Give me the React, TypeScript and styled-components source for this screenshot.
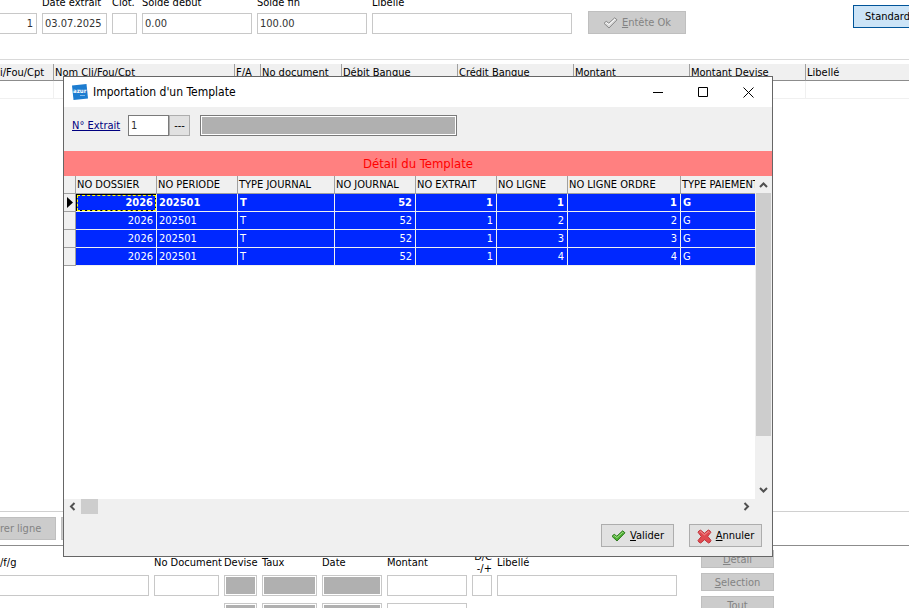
import React, { useState } from 'react';
import styled, { createGlobalStyle } from 'styled-components';

const GlobalStyle = createGlobalStyle`
    * {
        box-sizing: border-box;
    }

    body {
        margin: 0;
        background: #ffffff;
    }

    body, button, input, table {
        font-family: 'DejaVu Sans Condensed', 'DejaVu Sans', Tahoma, sans-serif;
        font-size: 11px;
        line-height: 14px;
        color: #000000;
    }
`;

const Page = styled.div`
    position: relative;
    display: flex;
    flex-direction: column;
    height: 100vh;
    overflow: hidden;
`;

const HeaderForm = styled.header`
    display: flex;
    flex: none;
    align-items: flex-end;
    gap: 5px;
    height: 34px;
    overflow: hidden;
`;

const Field = styled.div<{ $width: number }>`
    display: flex;
    flex: none;
    flex-direction: column;
    gap: 3px;
    width: ${({ $width }) => $width}px;
`;

const Label = styled.label`
    white-space: nowrap;
`;

const TextBox = styled.input<{ $filled?: boolean; $alignRight?: boolean; $cut?: boolean; $dark?: boolean }>`
    width: 100%;
    min-width: 0;
    height: 21px;
    margin: 0;
    padding: ${({ $filled }) => ($filled ? '1px' : '0 3px 0 2px')};
    border: 1px solid ${({ $dark }) => ($dark ? '#7a7a7a' : '#c8c8c8')};
    border-left-width: ${({ $cut }) => ($cut ? 0 : 1)}px;
    border-radius: 0;
    background: ${({ $filled }) => ($filled ? '#b0b0b0' : '#ffffff')};
    box-shadow: ${({ $filled }) => ($filled ? 'inset 0 0 0 1px #ffffff' : 'none')};
    color: #333333;
    text-align: ${({ $alignRight }) => ($alignRight ? 'right' : 'left')};
    outline: none;
`;

const Button = styled.button<{ $width: number; $height?: number }>`
    display: flex;
    flex: none;
    align-items: center;
    justify-content: center;
    gap: 4px;
    width: ${({ $width }) => $width}px;
    height: ${({ $height = 23 }) => $height}px;
    padding: 1px 0 0;
    border: 1px solid #adadad;
    border-radius: 0;
    background: #e1e1e1;
    white-space: nowrap;

    &:disabled {
        border-color: #bfbfbf;
        background: #cccccc;
        color: #838383;
    }
`;

const HeaderButton = styled(Button)`
    margin-left: 11px;
`;

const StandardButton = styled(Button)`
    justify-content: flex-start;
    margin-left: auto;
    margin-bottom: 6px;
    padding-left: 11px;
    border-color: #005499;
    border-right: 0;
    background: #cce4f7;
    overflow: hidden;
`;

const Hotkey = styled.span`
    text-decoration: underline;
`;

const GridArea = styled.main`
    flex: 1;
    min-height: 0;
    margin-top: 25px;
    padding-top: 4px;
    border-top: 1px solid #d9d9d9;
    border-bottom: 1px solid #d0d0d0;
    overflow: hidden;
`;

const EntryTable = styled.table`
    width: 100%;
    table-layout: fixed;
    border-collapse: separate;
    border-spacing: 0;

    th {
        height: 17px;
        padding: 1px 0 0 1px;
        border-right: 1px solid #a0a0a0;
        border-bottom: 1px solid #8c8c8c;
        background: #f0f0f0;
        font-weight: normal;
        text-align: left;
        white-space: nowrap;
    }

    th:first-child {
        padding-left: 0;
    }

    td {
        height: 18px;
        padding: 0;
        border-right: 1px solid #f0f0f0;
        border-bottom: 1px solid #f0f0f0;
    }

    th:last-child, td:last-child {
        border-right: 0;
    }
`;

const LineActions = styled.div`
    display: flex;
    flex: none;
    gap: 5px;
    height: 34px;
    padding-top: 5px;
    border-bottom: 1px solid #8c8c8c;
`;

const CutButton = styled(Button)`
    justify-content: flex-start;
    border-left: 0;
`;

const EntryForm = styled.footer`
    display: flex;
    flex: none;
    height: 62px;
    overflow: hidden;
`;

const EntryFields = styled.div`
    display: grid;
    grid-template-columns: 149px 65px 33px 55px 60px 80px 20px 180px;
    grid-template-rows: 29px 21px 28px;
    column-gap: 5px;
    align-items: start;
`;

const EntryLabel = styled.label`
    padding-top: 10px;
    white-space: nowrap;
`;

const SignLabel = styled.label`
    padding-top: 5px;
    line-height: 12px;
    text-align: right;
    white-space: nowrap;
`;

const SecondRow = styled.div`
    display: grid;
    grid-column: 3 / span 4;
    grid-template-columns: subgrid;
    padding-top: 7px;
`;

const SideActions = styled.div`
    display: flex;
    flex-direction: column;
    gap: 5px;
    margin: 4px 0 0 24px;
`;

const SideButton = styled(Button)`
    padding-top: 2px;
`;

const Dialog = styled.section`
    position: absolute;
    top: 76px;
    right: 136px;
    bottom: 51px;
    left: 63px;
    display: flex;
    flex-direction: column;
    border: 1px solid #666666;
    background: #f0f0f0;
`;

const TitleBar = styled.div`
    display: flex;
    flex: none;
    align-items: center;
    height: 30px;
    padding-left: 8px;
    background: #ffffff;
`;

const Title = styled.h1`
    flex: 1;
    margin: 0 0 0 5px;
    font-size: 12px;
    font-weight: normal;
`;

const WindowButton = styled.button`
    display: flex;
    align-items: center;
    justify-content: center;
    width: 46px;
    height: 30px;
    padding: 0;
    border: 0;
    background: transparent;
`;

const SearchRow = styled.div`
    display: flex;
    flex: none;
    align-items: flex-start;
    height: 44px;
    padding: 8px 0 0 8px;
`;

const SearchLabel = styled.label`
    width: 56px;
    line-height: 21px;
    color: #000080;
    text-decoration: underline;
    white-space: nowrap;
`;

const SearchBox = styled.div<{ $width: number }>`
    display: flex;
    width: ${({ $width }) => $width}px;
`;

const LookupButton = styled(Button)`
    margin-right: 10px;
`;

const Banner = styled.h2`
    flex: none;
    height: 25px;
    margin: 0;
    background: #ff8080;
    color: #ff0000;
    font-size: 13px;
    font-weight: normal;
    line-height: 25px;
    text-align: center;
`;

const Detail = styled.div`
    display: flex;
    flex: 1;
    min-height: 0;
`;

const DetailView = styled.div`
    flex: 1;
    min-width: 0;
    background: #ffffff;
    overflow: hidden;
`;

const DetailTable = styled.table`
    width: 100%;
    table-layout: fixed;
    border-collapse: separate;
    border-spacing: 0;
`;

const HeadCell = styled.th`
    height: 18px;
    padding: 1px 0 0 1px;
    border-right: 1px solid #a0a0a0;
    border-bottom: 1px solid #a0a0a0;
    background: #f0f0f0;
    font-weight: normal;
    text-align: left;
    white-space: nowrap;
    overflow: hidden;

    &:last-child {
        border-right: 0;
    }
`;

const MarkerCell = styled.td`
    height: 18px;
    padding: 0 0 0 3px;
    border-right: 1px solid #a0a0a0;
    border-bottom: 1px solid #a0a0a0;
    background: #f0f0f0;
    line-height: 0;
`;

const DataCell = styled.td<{ $right?: boolean; $current?: boolean; $focused?: boolean }>`
    height: 18px;
    padding: 1px ${({ $right }) => ($right ? 3 : 0)}px 0 2px;
    border-right: 1px solid #f0f0f0;
    border-bottom: 1px solid #f0f0f0;
    background: #0028ff;
    color: #ffffff;
    font-weight: ${({ $current }) => ($current ? 'bold' : 'normal')};
    text-align: ${({ $right }) => ($right ? 'right' : 'left')};

    ${({ $focused }) => $focused && `
        box-shadow: inset 0 0 0 1px #000000;
        outline: 1px dashed #ffff00;
        outline-offset: -2px;
    `}

    &:last-child {
        border-right: 0;
    }
`;

const VerticalBar = styled.div`
    display: flex;
    flex: none;
    flex-direction: column;
    width: 17px;
    padding: 0 1px;
`;

const HorizontalBar = styled.div`
    display: flex;
    flex: none;
    height: 15px;
    padding-right: 17px;
`;

const Arrow = styled.button`
    display: flex;
    flex: none;
    align-items: center;
    justify-content: center;
    width: 17px;
    height: 17px;
    padding: 0;
    border: 0;
    background: transparent;

    ${VerticalBar} & {
        width: 15px;
    }

    ${HorizontalBar} & {
        height: 15px;
    }
`;

const Track = styled.div`
    display: flex;
    flex: 1;
    flex-direction: inherit;
    min-height: 0;
`;

const VerticalThumb = styled.div`
    width: 15px;
    height: 84%;
    background: #cdcdcd;
`;

const HorizontalThumb = styled.div`
    width: 17px;
    background: #cdcdcd;
`;

const DialogActions = styled.div`
    display: flex;
    flex: none;
    justify-content: flex-end;
    gap: 15px;
    padding: 10px 10px 9px;
`;

const arrowPaths = {
    up: 'M1 7 L4.500 3.500 L8 7',
    down: 'M1 2 L4.500 5.500 L8 2',
    left: 'M6.500 1 L3 4.500 L6.500 8',
    right: 'M2.500 1 L6 4.500 L2.500 8',
};

const Chevron: React.FC<{ to: keyof typeof arrowPaths }> = ({ to }) => (
    <svg width="9" height="9" viewBox="0 0 9 9" fill="none" stroke="#505050" strokeWidth="2">
        <path d={arrowPaths[to]} />
    </svg>
);

const CheckIcon: React.FC<{ fill: string; shine: string; stroke: string }> = ({ fill, shine, stroke }) => (
    <svg width="15" height="14" viewBox="0 0 15 14">
        <path d="M1 7.300 L3.200 5.300 L5.800 7.200 L11.700 1.800 L14 3.800 L6 12 Z" fill={fill} stroke={stroke} strokeLinejoin="round" />
        <path d="M2.500 7.300 L3.300 6.600 L5.900 8.600 L11.800 3.200 L12.500 3.800" fill="none" stroke={shine} />
    </svg>
);

const CrossIcon: React.FC = () => (
    <svg width="15" height="15" viewBox="0 0 15 15">
        <path
            d="M1 3.200 Q2 1.200 3.700 1.200 L7.400 4.300 L11.300 1 Q13.200 1.400 13.800 3.400 L10.700 7.300 L14 11.400 Q13.500 13.500 11.500 14 L7.500 10.700 L3.700 14 Q1.500 13.500 1 11.500 L4.300 7.500 Z"
            fill="#e04a50"
            stroke="#c0343a"
            strokeLinejoin="round"
        />
        <path d="M2.500 3.200 L3.700 2.500 L7.400 5.800 L11.300 2.500 L12.500 3.400" fill="none" stroke="#f09a9c" />
    </svg>
);

const AppIcon: React.FC = () => (
    <svg width="16" height="16" viewBox="0 0 16 16">
        <path d="M0 1.500 L14.500 0 L16 14.500 L1.500 16 Z" fill="#1c7cd0" />
        <text x="1" y="9" fontSize="6" fontWeight="bold" fill="#ffffff">azur</text>
        <path d="M8 11.500 H13" stroke="#7fb8e8" />
    </svg>
);

const entryColumns = [
    { title: 'i/Fou/Cpt', width: 54 },
    { title: 'Nom Cli/Fou/Cpt', width: 181 },
    { title: 'F/A', width: 26 },
    { title: 'No document', width: 81 },
    { title: 'Débit Banque', width: 116 },
    { title: 'Crédit Banque', width: 116 },
    { title: 'Montant', width: 116 },
    { title: 'Montant Devise', width: 116 },
    { title: 'Libellé', width: undefined },
];

const detailColumns = [
    { key: 'dossier', title: 'NO DOSSIER', width: 81, right: true },
    { key: 'periode', title: 'NO PERIODE', width: 81 },
    { key: 'type', title: 'TYPE JOURNAL', width: 97 },
    { key: 'journal', title: 'NO JOURNAL', width: 81, right: true },
    { key: 'extrait', title: 'NO EXTRAIT', width: 81, right: true },
    { key: 'ligne', title: 'NO LIGNE', width: 71, right: true },
    { key: 'ordre', title: 'NO LIGNE ORDRE', width: 113, right: true },
    { key: 'paiement', title: 'TYPE PAIEMENT', width: undefined },
];

const detailRows: Record<string, string>[] = ['1', '2', '3', '4'].map((n) => ({
    dossier: '2026',
    periode: '202501',
    type: 'T',
    journal: '52',
    extrait: '1',
    ligne: n,
    ordre: n,
    paiement: 'G',
}));

const ImportDialog: React.FC = () => {
    const [extrait, setExtrait] = useState('1');
    const [current, setCurrent] = useState(0);

    return (
        <Dialog role="dialog" aria-labelledby="dialog-title">
            <TitleBar>
                <AppIcon />
                <Title id="dialog-title">Importation d'un Template</Title>
                <WindowButton aria-label="Réduire">
                    <svg width="11" height="11" stroke="#000000"><path d="M1 5.500 H11" /></svg>
                </WindowButton>
                <WindowButton aria-label="Agrandir">
                    <svg width="11" height="11" stroke="#000000" fill="none"><path d="M0.500 0.500 H9.500 V9.500 H0.500 Z" /></svg>
                </WindowButton>
                <WindowButton aria-label="Fermer">
                    <svg width="12" height="11" stroke="#000000"><path d="M0.500 0.500 L10.500 10.500 M10.500 0.500 L0.500 10.500" /></svg>
                </WindowButton>
            </TitleBar>
            <SearchRow>
                <SearchLabel htmlFor="extrait">N° Extrait</SearchLabel>
                <SearchBox $width={41}>
                    <TextBox id="extrait" $dark value={extrait} onChange={(e) => setExtrait(e.target.value)} />
                </SearchBox>
                <LookupButton $width={21} $height={21}>---</LookupButton>
                <SearchBox $width={257}>
                    <TextBox $filled $dark readOnly aria-label="Description" />
                </SearchBox>
            </SearchRow>
            <Banner>Détail du Template</Banner>
            <Detail>
                <DetailView>
                    <DetailTable>
                        <colgroup>
                            <col style={{ width: 12 }} />
                            {detailColumns.map((c) => <col key={c.key} style={{ width: c.width }} />)}
                        </colgroup>
                        <thead>
                            <tr>
                                <HeadCell />
                                {detailColumns.map((c) => <HeadCell key={c.key}>{c.title}</HeadCell>)}
                            </tr>
                        </thead>
                        <tbody>
                            {detailRows.map((row, i) => (
                                <tr key={row.ligne} onClick={() => setCurrent(i)}>
                                    <MarkerCell>
                                        {i === current && (
                                            <svg width="6" height="11"><path d="M0 0 L6 5.500 L0 11 Z" /></svg>
                                        )}
                                    </MarkerCell>
                                    {detailColumns.map((c, j) => (
                                        <DataCell
                                            key={c.key}
                                            $right={c.right}
                                            $current={i === current}
                                            $focused={i === current && j === 0}
                                        >
                                            {row[c.key]}
                                        </DataCell>
                                    ))}
                                </tr>
                            ))}
                        </tbody>
                    </DetailTable>
                </DetailView>
                <VerticalBar>
                    <Arrow aria-label="Haut"><Chevron to="up" /></Arrow>
                    <Track><VerticalThumb /></Track>
                    <Arrow aria-label="Bas"><Chevron to="down" /></Arrow>
                </VerticalBar>
            </Detail>
            <HorizontalBar>
                <Arrow aria-label="Gauche"><Chevron to="left" /></Arrow>
                <Track><HorizontalThumb /></Track>
                <Arrow aria-label="Droite"><Chevron to="right" /></Arrow>
            </HorizontalBar>
            <DialogActions>
                <Button $width={73}>
                    <CheckIcon fill="#4caf32" shine="#a5e08c" stroke="#2f7a1e" />
                    <span><Hotkey>V</Hotkey>alider</span>
                </Button>
                <Button $width={73}>
                    <CrossIcon />
                    <span><Hotkey>A</Hotkey>nnuler</span>
                </Button>
            </DialogActions>
        </Dialog>
    );
};

const App: React.FC = () => {
    return (
        <Page>
            <GlobalStyle />
            <HeaderForm>
                <Field $width={37}>
                    <TextBox $cut $alignRight aria-label="Numéro" defaultValue="1" />
                </Field>
                <Field $width={65}>
                    <Label htmlFor="date-extrait">Date extrait</Label>
                    <TextBox id="date-extrait" defaultValue="03.07.2025" />
                </Field>
                <Field $width={25}>
                    <Label htmlFor="clot">Clot.</Label>
                    <TextBox id="clot" />
                </Field>
                <Field $width={110}>
                    <Label htmlFor="solde-debut">Solde début</Label>
                    <TextBox id="solde-debut" defaultValue="0.00" />
                </Field>
                <Field $width={110}>
                    <Label htmlFor="solde-fin">Solde fin</Label>
                    <TextBox id="solde-fin" defaultValue="100.00" />
                </Field>
                <Field $width={200}>
                    <Label htmlFor="libelle">Libellé</Label>
                    <TextBox id="libelle" />
                </Field>
                <HeaderButton $width={98} disabled>
                    <CheckIcon fill="#d8d8d8" shine="#ffffff" stroke="#8a8a8a" />
                    <span><Hotkey>E</Hotkey>ntête Ok</span>
                </HeaderButton>
                <StandardButton $width={56}>Standard</StandardButton>
            </HeaderForm>
            <GridArea>
                <EntryTable>
                    <colgroup>
                        {entryColumns.map((c) => <col key={c.title} style={{ width: c.width }} />)}
                    </colgroup>
                    <thead>
                        <tr>{entryColumns.map((c) => <th key={c.title}>{c.title}</th>)}</tr>
                    </thead>
                    <tbody>
                        <tr>{entryColumns.map((c) => <td key={c.title} />)}</tr>
                    </tbody>
                </EntryTable>
            </GridArea>
            <LineActions>
                <CutButton $width={56} disabled>rer ligne</CutButton>
                <Button $width={73} disabled aria-label="Ligne suivante" />
            </LineActions>
            <EntryForm>
                <EntryFields>
                    <EntryLabel htmlFor="compte">/f/g</EntryLabel>
                    <EntryLabel htmlFor="no-document">No Document</EntryLabel>
                    <EntryLabel htmlFor="devise">Devise</EntryLabel>
                    <EntryLabel htmlFor="taux">Taux</EntryLabel>
                    <EntryLabel htmlFor="date">Date</EntryLabel>
                    <EntryLabel htmlFor="montant">Montant</EntryLabel>
                    <SignLabel htmlFor="signe">D/C<br />-/+</SignLabel>
                    <EntryLabel htmlFor="libelle-ligne">Libellé</EntryLabel>
                    <TextBox id="compte" $cut />
                    <TextBox id="no-document" />
                    <TextBox id="devise" $filled readOnly />
                    <TextBox id="taux" $filled readOnly />
                    <TextBox id="date" $filled readOnly />
                    <TextBox id="montant" />
                    <TextBox id="signe" />
                    <TextBox id="libelle-ligne" />
                    <SecondRow>
                        <TextBox aria-label="Devise 2" $filled readOnly />
                        <TextBox aria-label="Taux 2" $filled readOnly />
                        <TextBox aria-label="Date 2" $filled readOnly />
                        <TextBox aria-label="Montant 2" />
                    </SecondRow>
                </EntryFields>
                <SideActions>
                    <SideButton $width={73} $height={18} disabled><span><Hotkey>D</Hotkey>etail</span></SideButton>
                    <SideButton $width={73} $height={18} disabled><span><Hotkey>S</Hotkey>election</span></SideButton>
                    <SideButton $width={73} $height={18} disabled><span><Hotkey>T</Hotkey>out</span></SideButton>
                </SideActions>
            </EntryForm>
            <ImportDialog />
        </Page>
    );
};

export default App;
